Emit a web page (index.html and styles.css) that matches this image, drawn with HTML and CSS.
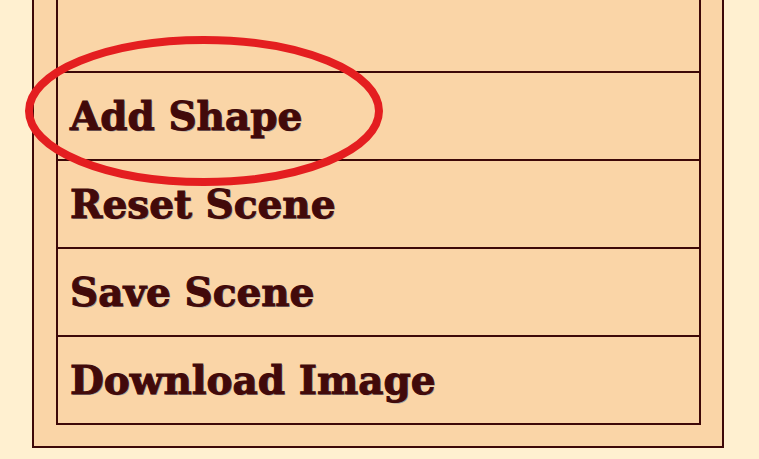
FILE: index.html
```html
<!DOCTYPE html>
<html>
<head>
<meta charset="utf-8">
<link rel="stylesheet" href="styles.css">
</head>
<body>
<div class="panel">
  <div class="menu">
    <div class="item"></div>
    <div class="item">Add Shape</div>
    <div class="item">Reset Scene</div>
    <div class="item">Save Scene</div>
    <div class="item">Download Image</div>
  </div>
</div>
<svg class="mark" width="759" height="459" viewBox="0 0 759 459">
  <ellipse cx="204" cy="111" rx="175" ry="71" fill="none" stroke="#e41e20" stroke-width="8"/>
</svg>
</body>
</html>
```
FILE: styles.css
```css
html, body {
  margin: 0;
  padding: 0;
}
body {
  background: #fff0d0;
  width: 759px;
  height: 459px;
  overflow: hidden;
  position: relative;
}
.panel {
  box-sizing: border-box;
  margin: -40px 0 0 32px;
  width: 692px;
  border: 2px solid #3d0808;
  background: #fad5a7;
  padding: 21px 21px 21px 22px;
}
.menu {
  border: 2px solid #3d0808;
  border-bottom: none;
  display: flex;
  flex-direction: column;
}
.item {
  height: 86px;
  border-bottom: 2px solid #3d0808;
  display: flex;
  align-items: center;
  padding-left: 12px;
  font-family: "DejaVu Serif", serif;
  font-weight: bold;
  font-size: 39px;
  color: #420a0a;
  -webkit-text-stroke: 1px #420a0a;
  text-shadow: 1px 1px 0 rgba(70, 110, 150, 0.55);
}
.mark {
  position: absolute;
  left: 0;
  top: 0;
}
```
